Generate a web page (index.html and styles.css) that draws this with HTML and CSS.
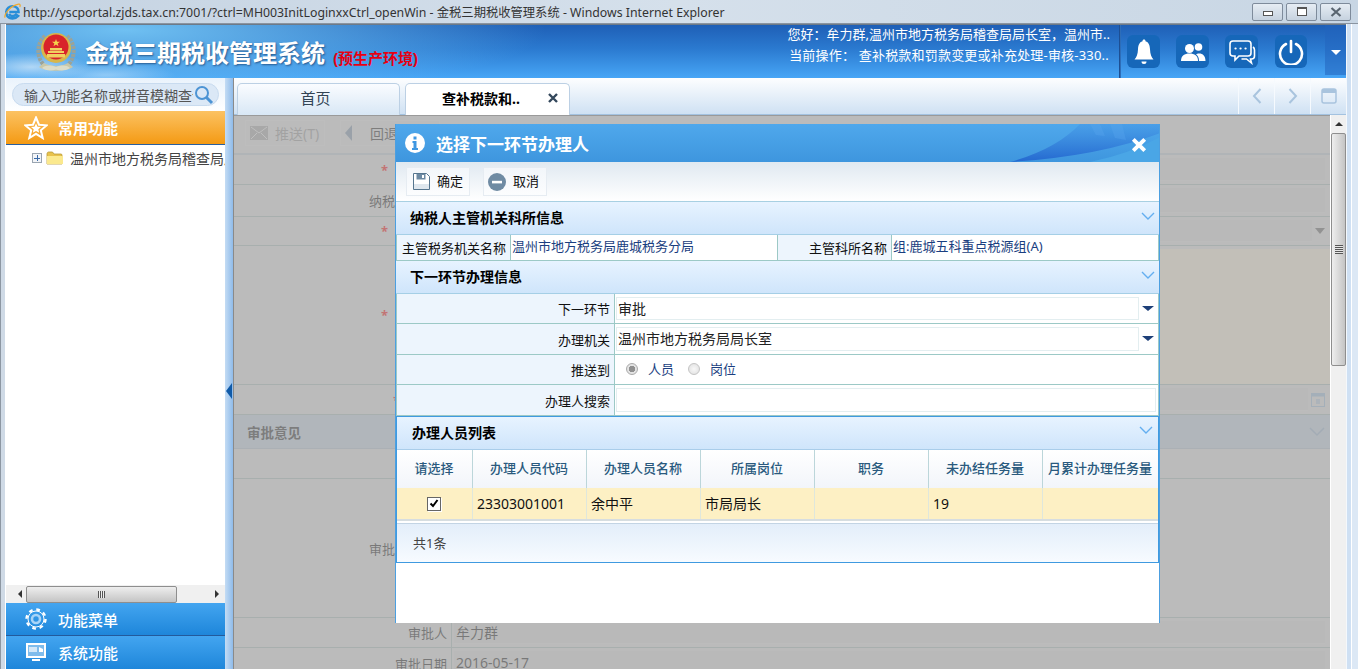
FILE: index.html
```html
<!DOCTYPE html>
<html lang="zh-CN">
<head>
<meta charset="utf-8">
<title>金税三期税收管理系统</title>
<link rel="stylesheet" href="styles.css">
</head>
<body>
<div class="window">
  <div class="titlebar">
    <svg class="ie-logo" viewBox="0 0 18 18">
      <path d="M2.5 9a6.5 6 0 1 1 13 .6H5.6M5.5 11.5c.9 2.4 4.6 3.4 7.2.8l2.3 1.4c-3 3.6-9 3.4-11.6 0C2.4 12 2.2 10.5 2.5 9" fill="none" stroke="#2a8fd8" stroke-width="2.6"/>
      <path d="M1 15.5C.2 10.5 8 2.5 15.5 1.2c1.600-.3 2 1.300 1.200 3" fill="none" stroke="#f0a92c" stroke-width="1.300"/>
    </svg>
    <span class="title-text">http://yscportal.zjds.tax.cn:7001/?ctrl=MH003InitLoginxxCtrl_openWin - 金税三期税收管理系统 - Windows Internet Explorer</span>
    <div class="win-btns">
      <span class="win-btn"><i class="glyph-min"></i></span>
      <span class="win-btn"><i class="glyph-max"></i></span>
      <span class="win-btn win-close"><svg viewBox="0 0 12 10" width="12" height="10"><path d="M1.500 1l9 8M10.500 1l-9 8" stroke="#5a6570" stroke-width="2.200"/></svg></span>
    </div>
  </div>

  <div class="app">
    <header class="topbar">
      <svg class="emblem" viewBox="0 0 42 42">
        <path d="M8 33C1 25 2 11 10 5M34 33c7-8 6-22-2-28" fill="none" stroke="#9aa39a" stroke-width="4" stroke-dasharray="3 1"/>
        <path d="M4 36c8 5 26 5 34 0l-5-4c-6 4-18 4-24 0z" fill="#c9c7a8"/>
        <circle cx="21" cy="17" r="15" fill="#d8b64a"/>
        <circle cx="21" cy="16" r="12.500" fill="#d8232a"/>
        <path d="M21 8l1 2.800h3l-2.400 1.700.9 2.800-2.500-1.700-2.500 1.700.9-2.800-2.400-1.700h3z" fill="#f5d44c"/>
        <path d="M13 20h16v2H13zM12 23h18v3.500H12zM15 17h12v2.500H15z" fill="#f0d060"/>
        <path d="M7 37c4-3 8-3 14-1 6-2 10-2 14 1-5 3-9 3-14 1.500C16 40 12 40 7 37z" fill="#dcdcc8"/>
      </svg>
      <h1 class="sys-name">金税三期税收管理系统</h1>
      <span class="env-tag">(预生产环境)</span>
      <div class="user-info">
        <div>您好：牟力群,温州市地方税务局稽查局局长室，温州市..</div>
        <div class="user-op">当前操作： 查补税款和罚款变更或补充处理-审核-330..</div>
      </div>
      <div class="top-icons">
        <span class="top-icon">
          <svg viewBox="0 0 24 28" width="24" height="28"><path d="M12 1.500c1 0 1.500.7 1.500 1.700 3.300 1 4.300 4 4.500 8 .2 5 1.500 8 3.500 10.300H2.500C4.500 19.200 5.800 16.200 6 11.200c.2-4 1.200-7 4.500-8C10.500 2.200 11 1.500 12 1.500zM9.500 23.500h5a2.500 2.500 0 0 1-5 0z" fill="#fff"/></svg>
        </span>
        <span class="top-icon">
          <svg viewBox="0 0 26 22" width="26" height="22"><circle cx="9.500" cy="7.500" r="4.500" fill="#fff"/><path d="M1 20c0-5.500 3.500-7.500 8.500-7.500S18 14.500 18 20z" fill="#fff"/><circle cx="18.500" cy="6" r="3.800" fill="#fff"/><path d="M19 20h6.500c0-5-2.500-7.500-6.500-7.500-1.300 0-2 .3-3 .8 2 1.500 3 3.700 3 6.700z" fill="#fff"/></svg>
        </span>
        <span class="top-icon">
          <svg viewBox="0 0 28 26" width="28" height="26" fill="none" stroke="#fff" stroke-width="1.600"><path d="M5 2h15a3 3 0 0 1 3 3v9a3 3 0 0 1-3 3h-9l-4 4v-4H5a3 3 0 0 1-3-3V5a3 3 0 0 1 3-3z"/><path d="M25 8c1.500 1 1.500 2 1.500 3v6c0 2-1 3-3 3h-1l1 4-5-4h-5" /><path d="M7.500 9.500h.1M12.500 9.500h.1M17.500 9.500h.1" stroke-width="2.200" stroke-linecap="round"/></svg>
        </span>
        <span class="top-icon icon-power">
          <svg viewBox="0 0 26 26" width="26" height="26" fill="none" stroke="#fff" stroke-width="2.600" stroke-linecap="round"><path d="M8 5a11 11 0 1 0 10 0"/><path d="M13 2v11"/></svg>
        </span>
      </div>
      <div class="top-arrow"><i></i></div>
    </header>

    <div class="workspace">
      <aside class="sidebar">
        <div class="search-area">
          <div class="search-pill">
            <span class="search-text">输入功能名称或拼音模糊查询</span>
            <svg viewBox="0 0 20 20" width="20" height="20" fill="none" stroke="#4d94d4"><circle cx="8" cy="8" r="6" stroke-width="2"/><path d="M12.500 12.500L18 18" stroke-width="3"/></svg>
          </div>
        </div>
        <div class="acc-head acc-orange">
          <svg viewBox="0 0 24 24" width="24" height="24"><path d="M12 1.500l3 7.200 7.800.6-6 5 1.900 7.700L12 17.800 5.300 22l1.900-7.700-6-5L9 8.700z" fill="none" stroke="#fff" stroke-width="2"/><path d="M12 7.500l1.500 3.200 3.500.3-2.700 2.300.9 3.500-3.200-1.900-3.200 1.900.9-3.500L7 11l3.500-.3z" fill="#fff"/></svg>
          <span>常用功能</span>
        </div>
        <div class="tree">
          <div class="tree-row">
            <i class="tree-plus"></i>
            <svg class="tree-folder" viewBox="0 0 17 14"><path d="M1 3c0-1 .5-2 1.500-2h4l1.500 2h7c.7 0 1 .5 1 1v9H1z" fill="#e8c24c" stroke="#b89a3a" stroke-width=".8"/><path d="M1 5h16v8H1z" fill="#fbe98e"/></svg>
            <span class="tree-label">温州市地方税务局稽查局局长室</span>
          </div>
        </div>
        <div class="h-scroll">
          <i class="arrow-left"></i>
          <div class="h-thumb"><i></i></div>
          <i class="arrow-right"></i>
        </div>
        <div class="acc-head acc-blue">
          <svg viewBox="0 0 24 24" width="24" height="24" fill="none" stroke="#fff"><circle cx="12" cy="12" r="9.500" stroke-width="2.400" stroke-dasharray="3.700 3.760"/><circle cx="12" cy="12" r="8" stroke-width="1"/><circle cx="12" cy="12" r="4" stroke="#a9d4f7" stroke-width="2.600"/></svg>
          <span>功能菜单</span>
        </div>
        <div class="acc-head acc-blue acc-last">
          <svg viewBox="0 0 24 20" width="24" height="20"><path d="M2 0h20v15H2z" fill="#fff"/><path d="M4 2h16v11H4z" fill="#7fbcec"/><path d="M5 4h8v5H5z" fill="#d4e8f8"/><path d="M15 4l4 2v3h-4z" fill="#fff"/><path d="M8 16h8v2H8z" fill="#fff"/></svg>
          <span>系统功能</span>
        </div>
      </aside>

      <div class="splitter"><i></i></div>

      <main class="main">
        <nav class="tabbar">
          <div class="tab tab-home">首页</div>
          <div class="tab tab-active"><b>查补税款和..</b><svg class="tab-close" viewBox="0 0 10 10" width="10" height="10"><path d="M1 1l8 8M9 1L1 9" stroke="#33475b" stroke-width="2.400"/></svg></div>
          <div class="tab-nav">
            <span class="nav-cell"><svg viewBox="0 0 12 18" width="12" height="18" fill="none" stroke="#a9c4de" stroke-width="2"><path d="M9.500 2L3 9l6.500 7"/></svg></span>
            <span class="nav-cell"><svg viewBox="0 0 12 18" width="12" height="18" fill="none" stroke="#a9c4de" stroke-width="2"><path d="M2.500 2L9 9l-6.500 7"/></svg></span>
            <span class="nav-cell"><svg viewBox="0 0 16 16" width="16" height="16"><rect x="1" y="1" width="14" height="14" rx="2" fill="none" stroke="#a9c4de" stroke-width="1.500"/><path d="M1 1h14v4H1z" fill="#a9c4de"/></svg></span>
          </div>
        </nav>

        <div class="content">
          <div class="page">
            <div class="page-toolbar">
              <span class="pg-btn pg-btn-off">
                <svg viewBox="0 0 18 14" width="18" height="14"><path d="M0 0h18v14H0z" fill="#aaa"/><path d="M1 1l8 6 8-6M1 13l6-6M17 13l-6-6" stroke="#f4f4f4" fill="none"/></svg>
                <span>推送(T)</span>
              </span>
              <span class="pg-btn pg-btn-back"><i class="back-tri"></i><span>回退</span></span>
            </div>
            <div class="pg-row pg-r1"><div class="pg-label"><em>*</em></div><div class="pg-value"><div class="pg-input"></div></div></div>
            <div class="pg-row pg-r2"><div class="pg-label">纳税人识别号</div><div class="pg-value"><div class="pg-input"></div></div></div>
            <div class="pg-row pg-r3"><div class="pg-label"><em>*</em></div><div class="pg-value"><div class="pg-input"></div><i class="pg-drop"></i></div></div>
            <div class="pg-row pg-r4"><div class="pg-label"><em>*</em></div><div class="pg-value pg-yellow"></div></div>
            <div class="pg-row pg-r5"><div class="pg-label"><em class="em-near">*</em></div><div class="pg-value"><div class="pg-input"></div>
              <svg class="pg-cal" viewBox="0 0 14 15" width="14" height="15"><rect x=".5" y="1.500" width="13" height="13" fill="none" stroke="#9fc0e0"/><path d="M1 1.500h12v3H1z" fill="#9fc0e0"/><path d="M5 7h4v5H5z" fill="#b8cfe4"/></svg></div></div>
            <div class="pg-section"><b>审批意见</b><svg viewBox="0 0 16 10" width="16" height="10" fill="none" stroke="#9ab8d4" stroke-width="1.500"><path d="M1 1l7 7 7-7"/></svg></div>
            <div class="pg-row pg-r6"><div class="pg-label"></div><div class="pg-value"></div></div>
            <div class="pg-row pg-r7"><div class="pg-label">审批意见内容</div><div class="pg-value"></div></div>
            <div class="pg-row pg-r8"><div class="pg-label">审批人</div><div class="pg-value"><div class="pg-input">牟力群</div></div></div>
            <div class="pg-row pg-r9"><div class="pg-label">审批日期</div><div class="pg-value"><div class="pg-input">2016-05-17</div></div></div>

            <div class="mask"></div>

            <section class="dialog">
              <div class="dlg-title">
                <svg class="dlg-swoosh" viewBox="0 0 180 38" width="180" height="38">
                  <defs>
                    <linearGradient id="swooshFill" x1="0" y1="0" x2="0" y2="1">
                      <stop offset="0" stop-color="#3f8fe2" stop-opacity=".35"/>
                      <stop offset="1" stop-color="#2468d0"/>
                    </linearGradient>
                  </defs>
                  <path d="M30 38C60 30 85 16 100 0h80v9Q120 32 30 38z" fill="url(#swooshFill)"/>
                  <path d="M110 0h10l5 12-9-1zM130 0h12l4 16-11-2z" fill="#5aa5ee" opacity=".35"/>
                  <path d="M110 38Q150 30 180 13v25z" fill="#4aa6e6"/>
                </svg>
                <svg class="dlg-info" viewBox="0 0 20 20" width="20" height="20"><circle cx="10" cy="10" r="10" fill="#fff"/><path d="M8.500 3.500h3v3h-3zM7.500 8h4v7h1.500v2H7v-2h1.500v-5h-1z" fill="#3f97e2"/></svg>
                <h2>选择下一环节办理人</h2>
                <svg class="dlg-x" viewBox="0 0 14 14" width="16" height="16"><path d="M2 2l10 10M12 2L2 12" stroke="#fff" stroke-width="3.400"/></svg>
              </div>

              <div class="dlg-toolbar">
                <span class="dlg-btn">
                  <svg viewBox="0 0 17 17" width="17" height="17"><path d="M.5.500h13l3 3v13H.5z" fill="#fff" stroke="#56768f"/><path d="M3.500 1h9v5.500h-9z" fill="#6d8aa3"/><path d="M9 2h2v3H9z" fill="#fff"/><path d="M1 11h15v5H1z" fill="#dfe7ee"/></svg>
                  <span class="btn-label">确定</span>
                </span>
                <span class="dlg-btn dlg-btn-cancel">
                  <svg viewBox="0 0 18 18" width="18" height="18"><circle cx="9" cy="9" r="9" fill="#6f8ba3"/><path d="M4 7.800h10v2.600H4z" fill="#fff"/></svg>
                  <span class="btn-label">取消</span>
                </span>
              </div>

              <div class="sec-head"><b>纳税人主管机关科所信息</b><svg class="chev" viewBox="0 0 14 9" width="14" height="9"><path d="M1 1l6 6 6-6" fill="none" stroke="#63aef0" stroke-width="1.400"/></svg></div>
              <div class="f-row f-h26">
                <div class="f-label f-w113">主管税务机关名称</div>
                <div class="f-text f-w266">温州市地方税务局鹿城税务分局</div>
                <div class="f-label f-w113">主管科所名称</div>
                <div class="f-text f-grow">组:鹿城五科重点税源组(A)</div>
              </div>

              <div class="sec-head"><b>下一环节办理信息</b><svg class="chev" viewBox="0 0 14 9" width="14" height="9"><path d="M1 1l6 6 6-6" fill="none" stroke="#63aef0" stroke-width="1.400"/></svg></div>
              <div class="f-row f-h30">
                <div class="f-label f-w217">下一环节</div>
                <div class="f-ctl"><div class="f-input f-select">审批</div><i class="dd-tri"></i></div>
              </div>
              <div class="f-row f-h31">
                <div class="f-label f-w217">办理机关</div>
                <div class="f-ctl"><div class="f-input f-select">温州市地方税务局局长室</div><i class="dd-tri"></i></div>
              </div>
              <div class="f-row f-h30">
                <div class="f-label f-w217">推送到</div>
                <div class="f-ctl f-radios">
                  <label class="radio-item"><i class="radio radio-on"></i>人员</label>
                  <label class="radio-item"><i class="radio"></i>岗位</label>
                </div>
              </div>
              <div class="f-row f-h31">
                <div class="f-label f-w217">办理人搜索</div>
                <div class="f-ctl"><div class="f-input"></div></div>
              </div>

              <div class="list-panel">
                <div class="list-head"><b>办理人员列表</b><svg class="chev" viewBox="0 0 14 9" width="14" height="9"><path d="M1 1l6 6 6-6" fill="none" stroke="#63aef0" stroke-width="1.400"/></svg></div>
                <div class="grid grid-head">
                  <div>请选择</div><div>办理人员代码</div><div>办理人员名称</div><div>所属岗位</div><div>职务</div><div>未办结任务量</div><div>月累计办理任务量</div>
                </div>
                <div class="grid grid-row">
                  <div class="cell-check"><span class="checkbox"><svg viewBox="0 0 10 9" width="10" height="9"><path d="M1.500 4.500L4 7l4.500-6" fill="none" stroke="#000" stroke-width="2"/></svg></span></div>
                  <div>23303001001</div><div>余中平</div><div>市局局长</div><div></div><div>19</div><div></div>
                </div>
                <div class="list-foot">共1条</div>
              </div>
            </section>
          </div>

          <div class="v-scroll">
            <div class="v-up"><i></i></div>
            <div class="v-thumb"><i></i></div>
          </div>
        </div>
      </main>
    </div>
  </div>
</div>
</body>
</html>
```

FILE: styles.css
```css
* { box-sizing: border-box; }
html, body { margin: 0; height: 100%; overflow: hidden; }
body {
  font-family: "Noto Sans", "Noto Sans CJK SC", sans-serif;
  font-size: 13px;
  color: #222;
  background: #dce8f5;
}
h1, h2 { margin: 0; }
i, em { font-style: normal; display: block; }

.window { height: 669px; display: flex; flex-direction: column; }

/* browser title bar */
.titlebar {
  height: 24px;
  flex: none;
  display: flex;
  align-items: center;
  padding-left: 4px;
  background: linear-gradient(90deg, #c5d3e2, #d5e0eb 50%, #c8d6e4);
  border-bottom: 1px solid #8a94a0;
}
.ie-logo { width: 17px; height: 17px; flex: none; }
.title-text { margin-left: 2px; font-size: 12.300px; color: #333; white-space: nowrap; }
.win-btns { margin-left: auto; margin-right: 7px; display: flex; gap: 3px; }
.win-btn {
  width: 31px; height: 18px;
  border: 1px solid #7e8b9b;
  border-radius: 2px;
  background: linear-gradient(#e6edf4, #c6d2df);
  display: flex; align-items: center; justify-content: center;
}
.glyph-min { width: 10px; height: 5px; margin-top: 4px; border: 1px solid #555; background: #fff; }
.glyph-max { width: 10px; height: 9px; border: 1px solid #555; border-top-width: 2px; background: #fff; }

/* application frame */
.app {
  flex: 1;
  min-height: 0;
  margin: 0 12px 0 6px;
  display: flex;
  flex-direction: column;
  box-shadow: -1px 0 0 #fff, -5px 0 0 #cfdae6, -6px 0 0 #8d97a2, 1px 0 0 #f4f8fc, 5px 0 0 #cfe0f3, 6px 0 0 #fff;
}
.topbar {
  height: 54px;
  flex: none;
  display: flex;
  align-items: flex-start;
  border-top: 1px solid #6d7a88;
  background:
    radial-gradient(ellipse 60px 14px at 25px 42px, rgba(255,255,255,.55), rgba(255,255,255,0)),
    radial-gradient(ellipse 70px 12px at 100px 50px, rgba(255,255,255,.35), rgba(255,255,255,0)),
    radial-gradient(ellipse 420px 70px at 120px 5px, #6fc0f2, rgba(111,192,242,0)),
    linear-gradient(#1f5fb6, #2b7ad0 45%, #47a6f6);
}
.emblem { width: 42px; height: 42px; margin: 6px 0 0 29px; flex: none; }
.sys-name {
  margin: 11px 0 0 8px;
  font-size: 24px;
  line-height: 34px;
  font-weight: 700;
  color: #fff;
  white-space: nowrap;
  text-shadow: 1px 1px 2px rgba(20,60,110,.7);
}
.env-tag {
  margin: 24px 0 0 8px;
  font-family: "Liberation Sans", "Noto Sans CJK SC", sans-serif;
  font-size: 15px;
  line-height: 20px;
  font-weight: 700;
  color: #e60012;
  white-space: nowrap;
}
.user-info {
  margin-left: auto;
  height: 53px;
  width: 340px;
  padding-right: 9px;
  border-right: 1px solid #1d4f93;
  box-shadow: 1px 0 0 #2d6db8;
  text-align: right;
  color: #fff;
  font-size: 13px;
  line-height: 21px;
  white-space: nowrap;
}
.user-info div:first-child { margin-top: -1px; }
.user-info .user-op { letter-spacing: .2px; margin-right: 1px; }
.top-icons { display: flex; margin-left: 7px; margin-top: 10px; gap: 16px; }
.top-icon {
  width: 33px; height: 33px;
  border-radius: 6px;
  background: #1667b9;
  display: flex; align-items: center; justify-content: center;
}
.icon-power { width: 32px; margin-left: 1px; }
.top-arrow {
  width: 21px; height: 50px;
  margin-left: 18px;
  background: rgba(35,100,190,.55);
  display: flex; align-items: center; justify-content: center;
}
.top-arrow i {
  width: 0; height: 0; margin-top: 4px;
  border: 5px solid transparent;
  border-top: 5px solid #fff;
  border-bottom: 0;
}

.workspace { flex: 1; min-height: 0; display: flex; }

/* sidebar */
.sidebar { width: 219px; flex: none; display: flex; flex-direction: column; background: #fff; }
.search-area {
  height: 33px; flex: none;
  padding: 5px 6px 0;
  background: linear-gradient(#eaf3fc, #fff);
}
.search-pill {
  height: 23px;
  border-radius: 12px;
  border: 1px solid #c8dbef;
  background: #dbe8f6;
  padding: 0 4px 0 11px;
  display: flex;
  align-items: center;
  justify-content: space-between;
}
.search-text { width: 169px; overflow: hidden; white-space: nowrap; font-size: 14px; color: #555; }
.acc-head {
  flex: none;
  display: flex;
  align-items: center;
  color: #fff;
  font-size: 15px;
  font-weight: 700;
  padding-left: 18px;
  gap: 10px;
}
.acc-head svg { flex: none; }
.acc-orange {
  height: 34px;
  background: linear-gradient(#fcc262, #f49a14);
  border-bottom: 1px solid #2a5f9e;
}
.acc-blue {
  height: 33px;
  font-weight: 500;
  background: linear-gradient(#43a5f0, #1e86da);
  border-bottom: 1px solid #235a9c;
}
.acc-last { border-bottom: 0; }
.tree { flex: 1; min-height: 0; overflow: hidden; }
.tree-row {
  height: 26px;
  padding-left: 26px;
  display: flex;
  align-items: center;
  white-space: nowrap;
}
.tree-plus {
  width: 10px; height: 10px; flex: none;
  border: 1px solid #9aa5b1;
  background:
    linear-gradient(#3a6aa8, #3a6aa8) center / 6px 1px no-repeat,
    linear-gradient(#3a6aa8, #3a6aa8) center / 1px 6px no-repeat,
    #f2f4f7;
}
.tree-folder { width: 17px; height: 14px; margin-left: 4px; flex: none; }
.tree-label { margin-left: 7px; width: 155px; overflow: hidden; font-size: 14px; color: #444; }
.h-scroll {
  height: 18px; flex: none;
  display: flex;
  align-items: center;
  background: #f0f0f0;
  padding: 0 6px 0 12px;
}
.arrow-left { width: 0; height: 0; border: 4px solid transparent; border-right: 4px solid #333; border-left: 0; }
.arrow-right { width: 0; height: 0; margin-left: auto; border: 4px solid transparent; border-left: 4px solid #333; border-right: 0; }
.h-thumb {
  width: 151px; height: 17px; margin-left: 4px;
  border: 1px solid #8e8e8e;
  border-radius: 2px;
  background: linear-gradient(#eee, #c4c4c4);
  display: flex; align-items: center; justify-content: center;
}
.h-thumb i {
  width: 7px; height: 7px;
  background: repeating-linear-gradient(90deg, #555 0 1px, #eee 1px 2px);
}
.splitter {
  width: 9px; flex: none;
  background: linear-gradient(90deg, #c4dcf4, #8fbbea);
  display: flex;
  align-items: center;
  border-right: 1px solid #8a8a8a;
  padding-top: 34px;
}
.splitter i {
  width: 0; height: 0; margin-left: 1px;
  border: 8px solid transparent;
  border-right: 6px solid #0f5aa8;
  border-left: 0;
}

/* main */
.main { flex: 1; min-width: 0; display: flex; flex-direction: column; }
.tabbar {
  height: 37px; flex: none;
  display: flex;
  align-items: flex-end;
  padding-left: 3px;
  gap: 5px;
  background: linear-gradient(#fdfeff, #cfe1f3);
  border-bottom: 1px solid #a3c2e0;
}
.tab {
  width: 163px; height: 32px;
  margin-bottom: -1px;
  padding-bottom: 4px;
  border: 1px solid #bcd0e4;
  border-bottom: 0;
  border-radius: 5px 5px 0 0;
  background: linear-gradient(#fafcff, #d8e7f5);
  font-size: 14px;
  color: #345;
  display: flex;
  align-items: center;
  justify-content: center;
}
.tab-home { font-size: 15px; padding-right: 6px; }
.tab-active {
  width: 165px;
  background: #fff;
  color: #000;
  position: relative;
  padding-right: 13px;
}
.tab-active b { font-weight: 700; }
.tab-close { position: absolute; right: 11px; top: 9px; }
.tab-nav { margin-left: auto; display: flex; height: 36px; align-self: flex-start; }
.nav-cell {
  width: 36px;
  border-left: 1px solid #f6fafe;
  display: flex;
  align-items: center;
  justify-content: center;
}
.content { flex: 1; min-height: 0; display: flex; }
.v-scroll { width: 16px; flex: none; background: #f0f0f0; border-left: 1px solid #fff; }
.v-up { height: 18px; display: flex; align-items: center; justify-content: center; }
.v-up i { width: 0; height: 0; border: 4px solid transparent; border-bottom: 4px solid #333; border-top: 0; }
.v-thumb {
  height: 233px;
  border: 1px solid #8e8e8e;
  border-radius: 2px;
  background: linear-gradient(90deg, #eee, #c4c4c4);
  display: flex; align-items: center; justify-content: center;
}
.v-thumb i {
  width: 8px; height: 9px;
  background: repeating-linear-gradient(#555 0 1px, #e6e6e6 1px 2px);
}

/* the page under the mask */
.page {
  flex: 1;
  min-width: 0;
  position: relative;
  overflow: hidden;
  background: #e8e8e8;
  border-top: 1px solid #9a9a9a;
  color: #111;
}
.page-toolbar {
  height: 39px;
  padding: 4px 0 0 11px;
  display: flex;
  gap: 15px;
  align-items: flex-start;
  border-bottom: 2px solid #c4d0dc;
}
.pg-btn {
  height: 26px;
  padding-left: 4px;
  display: flex;
  align-items: center;
  gap: 7px;
  border: 1px solid #eeeeee;
  font-size: 14px;
}
.pg-btn-off { width: 80px; color: #999; }
.pg-btn-back { width: 100px; gap: 18px; color: #222; }
.back-tri {
  width: 0; height: 0;
  border: 8px solid transparent;
  border-right: 7px solid #7f96ad;
  border-left: 0;
}
.pg-row { display: flex; border-bottom: 1px solid #acc0bf; }
.pg-r1 { height: 30px; }
.pg-r2 { height: 32px; }
.pg-r3 { height: 29px; }
.pg-r4 { height: 139px; }
.pg-r5 { height: 30px; }
.pg-r6 { height: 30px; }
.pg-r7 { height: 139px; }
.pg-r8 { height: 30px; }
.pg-r9 { height: 30px; border-bottom: 0; }
.pg-label {
  width: 218px;
  flex: none;
  border-right: 1px solid #acc0bf;
  padding-right: 4px;
  display: flex;
  align-items: center;
  justify-content: flex-end;
  white-space: nowrap;
  font-size: 13px;
}
.pg-label em { color: #f00; margin-right: 59px; font-size: 13px; font-weight: 700; }
.pg-label em.em-near { margin-right: 47px; }
.pg-value {
  flex: 1;
  min-width: 0;
  display: flex;
  align-items: center;
  padding: 3px 5px 3px 2px;
}
.pg-yellow { background: #fff5de; margin-top: 3px; }
.pg-input {
  flex: 1;
  align-self: stretch;
  background: #e2e2e2;
  border-bottom: 1px solid #ececec;
  font-size: 14px;
  padding-left: 2px;
  line-height: 24px;
}
.pg-drop {
  width: 0; height: 0;
  margin: 0 0 0 3px;
  border: 5px solid transparent;
  border-top: 6px solid #666;
  border-bottom: 0;
}
.pg-cal { margin: 0 0 0 3px; flex: none; }
.pg-section {
  height: 34px;
  padding: 0 5px 0 13px;
  display: flex;
  align-items: center;
  justify-content: space-between;
  background: #c8d8e8;
  border-bottom: 1px solid #b6c6d4;
  font-size: 13.500px;
  color: #222;
}

.mask {
  position: absolute;
  inset: 0;
  background: rgba(167, 167, 167, .69);
}

/* dialog */
.dialog {
  position: absolute;
  left: 161px;
  top: 8px;
  width: 765px;
  height: 499px;
  overflow: hidden;
  background: #fff;
  border-left: 1px solid #4c9fe0;
  border-right: 1px solid #4c9fe0;
  color: #111;
}
.dlg-title {
  height: 38px;
  position: relative;
  margin: 0 -1px;
  background: linear-gradient(#4fa8ec, #3e96de);
  display: flex;
  align-items: center;
  padding-left: 10px;
}
.dlg-swoosh { position: absolute; right: 0; top: 0; }
.dlg-info { position: relative; flex: none; }
.dlg-title h2 {
  position: relative;
  margin-left: 11px;
  font-size: 17px;
  font-weight: 700;
  color: #fff;
}
.dlg-x { position: absolute; right: 13px; top: 13px; }
.dlg-toolbar {
  height: 40px;
  padding: 5px 0 0 10px;
  display: flex;
  gap: 13px;
  align-items: flex-start;
  background: linear-gradient(#e0e9f1, #fff);
  border-bottom: 1px solid #a8d0e2;
}
.dlg-btn {
  width: 64px; height: 29px;
  padding-left: 6px;
  display: flex;
  align-items: center;
  gap: 7px;
  border: 1px solid #e6ecf2;
  background: linear-gradient(#f2f6fa, #fcfdfe);
  font-size: 13px;
}
.dlg-btn-cancel { padding-left: 4px; }
.btn-label { margin-bottom: 3px; }
.sec-head {
  height: 33px;
  padding: 0 0 3px 14px;
  position: relative;
  display: flex;
  align-items: center;
  background: linear-gradient(#e7f3ff, #cfe5fb);
  border-bottom: 1px solid #a5cfe6;
  font-size: 14px;
  color: #000;
}
.chev { position: absolute; right: 4px; top: 10px; }
.f-row {
  display: flex;
  padding: 0 1px;
  background: #9cc9c6;
  border-bottom: 1px solid #9cc9c6;
}
.f-h26 { height: 26px; }
.f-h30 { height: 30px; }
.f-h31 { height: 31px; }
.f-label {
  flex: none;
  margin-right: 1px;
  padding-right: 4px;
  background: #edf5fd;
  display: flex;
  align-items: center;
  justify-content: flex-end;
  white-space: nowrap;
  font-size: 13px;
}
.f-w113 { width: 113px; }
.f-w217 { width: 217px; }
.f-w266 { width: 266px; margin-right: 1px; }
.f-grow { flex: 1; margin: 0; }
.f-text {
  background: #fff;
  color: #1a3e80;
  font-size: 13px;
  line-height: 22px;
  padding-left: 1px;
  white-space: nowrap;
}
.f-ctl {
  flex: 1;
  min-width: 0;
  background: #fff;
  position: relative;
  padding: 3px 2px 3px 1px;
}
.f-input {
  height: 100%;
  border: 1px solid #e3eef0;
  font-size: 14px;
  line-height: 22px;
  padding-left: 1px;
  color: #222;
}
.f-select { margin-right: 17px; }
.dd-tri {
  position: absolute;
  right: 4px; top: 12px;
  width: 0; height: 0;
  border: 6px solid transparent;
  border-top: 5px solid #1d3f78;
  border-bottom: 0;
}
.f-radios { display: flex; align-items: center; padding-left: 11px; gap: 14px; }
.radio-item {
  display: flex;
  align-items: center;
  gap: 10px;
  color: #1a3e80;
  font-size: 13px;
  padding-bottom: 2px;
}
.radio {
  width: 12px; height: 12px;
  border-radius: 50%;
  border: 1px solid #c4c4c4;
  background: radial-gradient(circle, #f8f8f8, #dedede);
}
.radio-on { background: radial-gradient(circle, #909090 0 3px, #e4e4e4 3.500px); border-color: #aaa; }
.list-panel {
  height: 147px;
  border: 1px solid #3f9ae0;
  display: flex;
  flex-direction: column;
}
.list-head {
  height: 33px;
  flex: none;
  padding: 0 0 3px 15px;
  position: relative;
  display: flex;
  align-items: center;
  background: linear-gradient(#e7f3ff, #cfe5fb);
  border-bottom: 1px solid #a9cdea;
  font-size: 14px;
  color: #000;
}
.list-head .chev { top: 9px; right: 5px; }
.grid {
  flex: none;
  display: grid;
  grid-template-columns: 76px repeat(5, 114px) 1fr;
}
.grid-head {
  height: 38px;
  background: linear-gradient(#fff, #f2f5fa);
  color: #2a5a7e;
  font-size: 13px;
  font-weight: 500;
}
.grid-head div {
  display: flex;
  align-items: center;
  justify-content: center;
  white-space: nowrap;
  border-right: 1px solid #bcd6da;
  padding: 0 1px 3px 0;
}
.grid-row {
  height: 33px;
  background: #fdf0c4;
  border-bottom: 2px solid #d6dde0;
  font-size: 14px;
  color: #111;
}
.grid-row div {
  display: flex;
  align-items: center;
  padding: 0 0 1px 4px;
  border-right: 1px solid #dfe7dc;
}
.grid-head div:last-child, .grid-row div:last-child { border-right: 0; }
.grid-row div.cell-check { justify-content: center; padding: 0 1px 0 0; }
.checkbox {
  width: 14px; height: 14px;
  background: #fff;
  border: 1px solid #666;
  box-shadow: 1px 1px 0 #fff;
  display: flex;
  align-items: center;
  justify-content: center;
}
.list-foot {
  flex: 1;
  margin-top: 2px;
  padding: 0 0 2px 16px;
  display: flex;
  align-items: center;
  background: linear-gradient(#e3eefa, #f7fbff);
  border-top: 1px solid #c3d4e4;
  font-size: 13px;
  color: #444;
}
```
